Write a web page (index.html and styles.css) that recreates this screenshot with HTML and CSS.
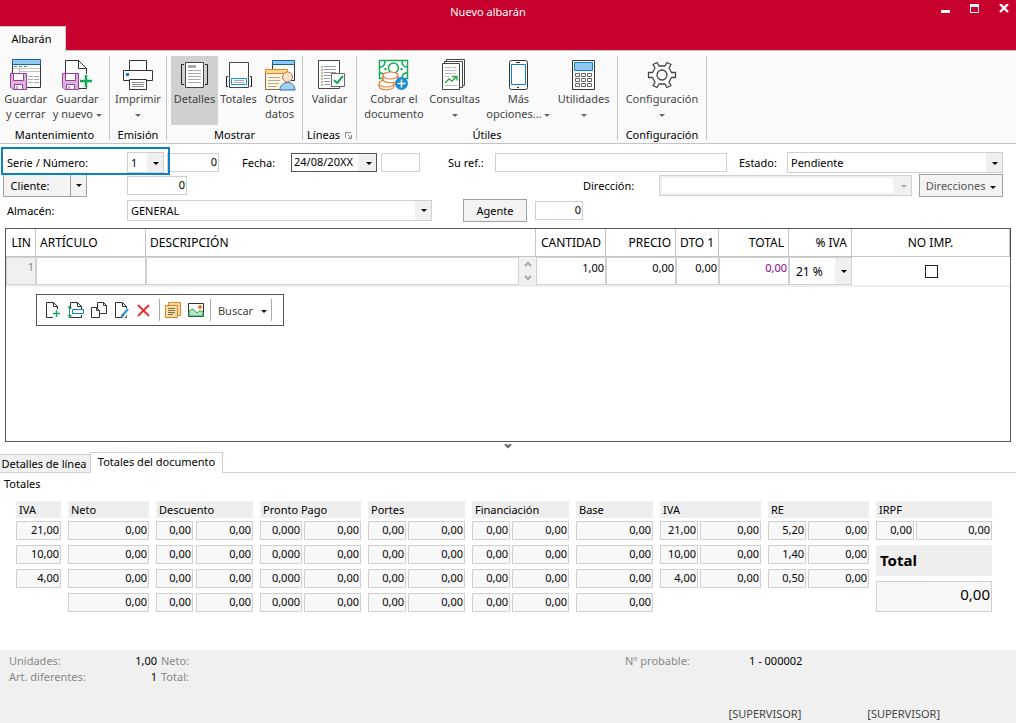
FILE: index.html
```html
<!DOCTYPE html>
<html lang="es">
<head>
<meta charset="utf-8">
<meta name="viewport" content="width=device-width, initial-scale=1">
<title>Nuevo albarán</title>
<link rel="stylesheet" href="styles.css">
</head>
<body>
<svg class="defs" aria-hidden="true">
  <symbol id="floppy" viewBox="0 0 17 17">
    <path d="M.5 .5H16.5V16.5H3L.5 14Z" fill="#dcb3dc" stroke="#9b3f9d"/>
    <path d="M3.500 .5V7.500H13.500V.5Z" fill="#fff" stroke="#9b3f9d"/>
    <path d="M4.500 16.500V11.500H12.500V16.500Z" fill="#fff" stroke="#9b3f9d"/>
    <path d="M7 13V16" stroke="#9b3f9d"/>
  </symbol>
  <symbol id="sheet" viewBox="0 0 18 18">
    <path d="M2.500 1.500H9.500L13.500 5.500V16.500H2.500Z" fill="#fff" stroke="#333"/>
    <path d="M9.500 1.500V5.500H13.500" fill="none" stroke="#333"/>
  </symbol>
</svg>

<header class="titlebar">
  <h1 class="title">Nuevo albarán</h1>
  <div class="window-buttons">
    <button type="button" aria-label="Minimizar"><svg width="9" height="9"><path d="M0 6h9v3H0z" fill="#fff"/></svg></button>
    <button type="button" aria-label="Maximizar"><svg width="9" height="9"><path d="M.5 .5h8v8h-8z" fill="none" stroke="#fff"/><path d="M0 0h9v3H0z" fill="#fff"/></svg></button>
    <button type="button" aria-label="Cerrar"><svg width="10" height="10"><path d="M1 0L9 8M9 0L1 8" stroke="#fff" stroke-width="2.400"/></svg></button>
  </div>
</header>
<nav class="ribbon-tabs"><button type="button" class="ribbon-tab">Albarán</button></nav>

<div class="ribbon">
  <section class="group g-mant">
    <div class="tools">
      <button type="button" class="tool">
        <svg width="32" height="32"><path d="M2.500 5.500h28v23h-28z" fill="#fff" stroke="#333"/><path d="M2.500 .5h28v5h-28z" fill="#91c9ef" stroke="#0b65ae"/><path d="M4 7.500h3M9 7.500h3M14 7.500h3" stroke="#777"/><path d="M3 9.500h27M9.500 10v5M9 12.500h21" stroke="#c4c4c4"/><path d="M18 17.500h5M24 17.500h5M18 20.500h5M24 20.500h5M18 23.500h5M24 23.500h5" stroke="#aaa"/><use href="#floppy" x="0" y="14" width="17" height="17"/></svg>
        <span>Guardar<br>y cerrar</span></button>
      <button type="button" class="tool">
        <svg width="32" height="32"><path d="M4.500 1.500h13l8 8v20h-21z" fill="#fff" stroke="#333"/><path d="M17.500 1.500v8h8" fill="none" stroke="#333"/><path d="M19 15h13v14H19z" fill="#fafafa"/><path d="M25.500 28v1.500H17" fill="none" stroke="#333"/><use href="#floppy" x="1" y="14" width="17" height="17"/><path d="M25 16v12M19 22h12" stroke="#17a955" stroke-width="2.500"/></svg>
        <span>Guardar<br>y nuevo <i class="caret"></i></span></button>
    </div>
    <h2>Mantenimiento</h2>
  </section>
  <section class="group g-emis">
    <div class="tools">
      <button type="button" class="tool">
        <svg width="32" height="32"><path d="M7.500 11V1.500h17V11" fill="#fff" stroke="#333"/><path d="M1.500 11.500h29v10h-29z" fill="#fff" stroke="#333"/><path d="M4 14h3v3H4z" fill="#0b80d0"/><path d="M7.500 20.500h17v10h-17z" fill="#fff" stroke="#333"/><path d="M10 23.500h12M10 25.500h12M10 27.500h12" stroke="#888"/></svg>
        <span>Imprimir<br><i class="caret"></i></span></button>
    </div>
    <h2>Emisión</h2>
  </section>
  <section class="group g-most">
    <div class="tools">
      <button type="button" class="tool active">
        <svg width="32" height="32"><path d="M6.500 3.500h18v25h-18z" fill="#fff" stroke="#444"/><path d="M9 6h8v3H9z" fill="#aaa"/><path d="M9 11.500h13M9 14.500h13M9 17.500h13M9 20.500h13M9 23.500h13" stroke="#aaa"/><path d="M5 5.500H2.500v20H5M26 5.500h2.500v20H26" fill="none" stroke="#222"/></svg>
        <span>Detalles</span></button>
      <button type="button" class="tool">
        <svg width="32" height="32"><path d="M6.500 3.500h19v25h-19z" fill="#fff" stroke="#444"/><path d="M8.500 19.500h15v6h-15z" fill="#fff" stroke="#099fe3"/><path d="M11 21.500h10M11 23.500h10" stroke="#aaa"/><path d="M5 17.500H3.500v10H5M27 17.500h1.500v10H27" fill="none" stroke="#222"/></svg>
        <span>Totales</span></button>
      <button type="button" class="tool">
        <svg width="32" height="32"><path d="M8.500 5.500h22v16h-22z" fill="#fff" stroke="#333"/><path d="M8.500 1.500h22v4h-22z" fill="#91c9ef" stroke="#0b65ae"/><path d="M1.500 14.500h22v16h-22z" fill="#fff4d8" stroke="#7b6c55"/><path d="M1.500 10.500h22v4h-22z" fill="#f6d88f" stroke="#e48332"/><path d="M4 18.500h12M4 21.500h12M4 24.500h11M4 27.500h9" stroke="#aaa"/><circle cx="23.500" cy="18" r="5" fill="#fbe0c6" stroke="#a87954"/><path d="M16 31c0-10 15-10 15 0z" fill="#a5cff0" stroke="#2373b5"/></svg>
        <span>Otros<br>datos</span></button>
    </div>
    <h2>Mostrar</h2>
  </section>
  <section class="group g-lin">
    <div class="tools">
      <button type="button" class="tool">
        <svg width="32" height="32"><path d="M4.500 1.500h21v28h-21z" fill="#fff" stroke="#444"/><path d="M10 7.500h12M10 10.500h12M10 13.500h12M10 16.500h7M10 19.500h6M10 22.500h6M10 25.500h6" stroke="#999"/><path d="M8 7v2M8 13v2M8 19v2M8 25v2" stroke="#17a955"/><path d="M8 10v2M8 16v2M8 22v2" stroke="#d3323e"/><path d="M17.500 14.500h13v13h-13z" fill="#fff" stroke="#666"/><path d="M20 21l3 3 6-7" fill="none" stroke="#17a955" stroke-width="2"/></svg>
        <span>Validar</span></button>
    </div>
    <h2>Líneas <svg class="launcher" width="7" height="7"><path d="M.5 6V.5H6" fill="none" stroke="#888"/><path d="M3 3l3 3M6.500 3v3.500H3" fill="none" stroke="#888"/></svg></h2>
  </section>
  <section class="group g-util">
    <div class="tools">
      <button type="button" class="tool t-cobrar">
        <svg width="32" height="32"><path d="M1.500 1.500h28v18h-28z" fill="#fff" stroke="#17a955" stroke-width="1.500"/><path d="M2 8q5 0 5-6M24 2q0 6 5 6M2 14q4 0 5 5M24 19q0-5 5-5" fill="none" stroke="#17a955" stroke-width="1.500"/><circle cx="15.500" cy="9" r="5" fill="#fff" stroke="#17a955" stroke-width="1.500"/><circle cx="7.500" cy="10" r="1.200" fill="#17a955"/><circle cx="23.500" cy="10" r="1.200" fill="#17a955"/><g fill="#fff" stroke="#e9792f" stroke-width="1.200"><path d="M1 25v2c0 5 15 5 15 0v-2"/><ellipse cx="8.500" cy="24.500" rx="7.500" ry="3.500"/><path d="M5 17v3c0 5 15 5 15 0v-3"/><ellipse cx="12.500" cy="16.500" rx="7.500" ry="3.500"/></g><circle cx="23.500" cy="24.500" r="6.500" fill="#188bd2"/><path d="M23.500 20.500v8M19.500 24.500h8" stroke="#fff" stroke-width="1.500"/></svg>
        <span>Cobrar el<br>documento</span></button>
      <button type="button" class="tool t-consultas">
        <svg width="32" height="32"><g fill="#fff" stroke="#444"><path d="M7.500 .5h18v26h-18z"/><path d="M5.500 2.500h18v26h-18z"/><path d="M3.500 4.500h17v26h-17z"/></g><path d="M6 8.500h6M13 8.500h4M6 11.500h12M6 14.500h7M14 14.500h3M6 17.500h4M6 26.500h12" stroke="#bbb"/><path d="M6 24l4-4 3 2 4-4M13 17.500h5v4" fill="none" stroke="#27ab42" stroke-width="1.400"/></svg>
        <span>Consultas<br><i class="caret"></i></span></button>
      <button type="button" class="tool t-mas">
        <svg width="32" height="32"><rect x="7.500" y="1.500" width="18" height="29" rx="2" fill="#fff" stroke="#333"/><path d="M9.500 5.500h14v20h-14z" fill="#fff" stroke="#0b80d0"/><path d="M14 3.500h4M15 28.500h2" stroke="#333"/></svg>
        <span>Más<br>opciones... <i class="caret"></i></span></button>
      <button type="button" class="tool t-util">
        <svg width="32" height="32"><path d="M4.500 1.500h22v29h-22z" fill="#fff" stroke="#333"/><path d="M6.500 3.500h18v8h-18z" fill="#91c9ef" stroke="#0b80d0"/><g fill="#fff" stroke="#666"><path d="M7.500 14.500h4v3h-4zM13.500 14.500h4v3h-4zM19.500 14.500h4v3h-4zM7.500 19.500h4v3h-4zM13.500 19.500h4v3h-4zM19.500 19.500h4v3h-4zM7.500 24.500h4v3h-4zM13.500 24.500h4v3h-4zM19.500 24.500h4v3h-4z"/></g></svg>
        <span>Utilidades<br><i class="caret"></i></span></button>
    </div>
    <h2>Útiles</h2>
  </section>
  <section class="group g-conf">
    <div class="tools">
      <button type="button" class="tool">
        <svg width="32" height="32"><path d="M2.500 13.500h4l2.500-4.500-2-3.500 4-2 2 3.500h6l2-3.500 4 2-2 3.500 2.500 4.500h4v5h-4l-2.500 4.500 2 3.500-4 2-2-3.500h-6l-2 3.500-4-2 2-3.500-2.500-4.500h-4z" fill="#fff" stroke="#444" stroke-width="1.300" stroke-linejoin="round"/><circle cx="16" cy="16" r="5" fill="#fff" stroke="#444" stroke-width="1.300"/></svg>
        <span>Configuración<br><i class="caret"></i></span></button>
    </div>
    <h2>Configuración</h2>
  </section>
</div>

<main>
  <form class="form">
    <div class="row first">
      <label class="lead" for="serie">Serie / Número:</label>
      <span class="combo w-serie"><select id="serie"><option>1</option></select></span>
      <input class="num w-numero" type="text" value="0" aria-label="Número">
      <label class="l-fecha" for="fecha">Fecha:</label>
      <span class="combo dark w-fecha"><input id="fecha" type="text" value="24/08/20XX"></span>
      <input class="w-hora" type="text" aria-label="Hora">
      <label class="l-ref" for="ref">Su ref.:</label>
      <input id="ref" class="w-ref" type="text">
      <label class="l-estado" for="estado">Estado:</label>
      <span class="combo w-estado"><select id="estado"><option>Pendiente</option></select></span>
    </div>
    <div class="row second">
      <span class="split"><button type="button">Cliente:</button><button type="button" aria-label="Más opciones de cliente"><i class="caret black"></i></button></span>
      <input class="num w-cliente" type="text" value="0" aria-label="Cliente">
      <span class="spacer"></span>
      <label class="l-dir" for="dir">Dirección:</label>
      <span class="combo off w-dir"><select id="dir" disabled><option></option></select></span>
      <button type="button" class="btn b-dir">Direcciones <i class="caret black"></i></button>
    </div>
    <div class="row third">
      <label class="lead" for="almacen">Almacén:</label>
      <span class="combo w-almacen"><select id="almacen"><option>GENERAL</option></select></span>
      <button type="button" class="btn b-agente">Agente</button>
      <input class="num w-agente" type="text" value="0" aria-label="Agente">
    </div>
  </form>

  <div class="lines">
    <table>
      <colgroup><col class="c-lin"><col class="c-art"><col><col class="c-70"><col class="c-70"><col class="c-dto"><col class="c-70"><col class="c-iva"><col class="c-noimp"></colgroup>
      <thead><tr><th class="r">LIN</th><th>ARTÍCULO</th><th>DESCRIPCIÓN</th><th class="r">CANTIDAD</th><th class="r">PRECIO</th><th class="r">DTO 1</th><th class="r">TOTAL</th><th class="r">% IVA</th><th class="c">NO IMP.</th></tr></thead>
      <tbody><tr>
        <td class="lin">1</td>
        <td><input type="text" aria-label="Artículo"></td>
        <td><div class="desc"><input type="text" aria-label="Descripción"><span class="spin"><svg width="8" height="20"><path d="M1 5l3-3 3 3M1 15l3 3 3-3" fill="none" stroke="#aaa" stroke-width="2"/></svg></span></div></td>
        <td><input class="num" type="text" value="1,00" aria-label="Cantidad"></td>
        <td><input class="num" type="text" value="0,00" aria-label="Precio"></td>
        <td><input class="num" type="text" value="0,00" aria-label="Descuento 1"></td>
        <td><input class="num purple" type="text" value="0,00" aria-label="Total"></td>
        <td><span class="combo iva"><select aria-label="% IVA"><option>21 %</option></select></span></td>
        <td class="c"><input type="checkbox" aria-label="No imprimir"></td>
      </tr></tbody>
    </table>
    <div class="toolbar">
      <button type="button" aria-label="Nueva línea"><svg width="18" height="18"><use href="#sheet" width="18" height="18"/><path d="M9 8h9v9H9z" fill="#fff"/><path d="M12.500 9v7M9 12.500h7" stroke="#17a955" stroke-width="1.400"/></svg></button>
      <button type="button" aria-label="Insertar línea"><svg width="18" height="18"><use href="#sheet" x="1" width="18" height="18"/><path d="M0 8h18v6H0z" fill="#fff"/><path d="M5.500 8.500h11v4h-11z" fill="#fff" stroke="#0b80d0"/><path d="M2.500 5v12M.5 7l2-2 2 2M.5 14l2 2 2-2" fill="none" stroke="#17a955"/></svg></button>
      <button type="button" aria-label="Duplicar línea"><svg width="18" height="18"><path d="M7.500 1.500h6l3 3v8h-9z" fill="#fff" stroke="#333"/><path d="M13.500 1.500v3h3" fill="none" stroke="#333"/><path d="M1.500 6.500h5l3 3v7h-8z" fill="#fff" stroke="#333"/><path d="M6.500 6.500v3h3" fill="none" stroke="#333"/></svg></button>
      <button type="button" aria-label="Modificar línea"><svg width="18" height="18"><use href="#sheet" width="18" height="18"/><path d="M17 7l-8 9" stroke="#fff" stroke-width="5"/><path d="M15 8l-6 7" stroke="#2c91d8" stroke-width="2.200"/><path d="M8 16l1-3 2 2z" fill="#0b65ae"/></svg></button>
      <button type="button" aria-label="Eliminar línea"><svg width="18" height="18"><path d="M2 4l11 11M13 4L2 15" stroke="#ec3434" stroke-width="2"/></svg></button>
      <span class="sep"></span>
      <button type="button" aria-label="Notas"><svg width="18" height="18"><path d="M4.500 1.500h12v13h-12z" fill="#fbdfa1" stroke="#e2802d"/><path d="M1.500 4.500h12v12h-12z" fill="#fbdfa1" stroke="#e2802d"/><path d="M4 7.500h7M4 9.500h7M4 11.500h7M4 13.500h5" stroke="#7b6c55"/></svg></button>
      <button type="button" aria-label="Imagen"><svg width="18" height="18"><path d="M1.500 2.500h15v13h-15z" fill="#fff" stroke="#333"/><path d="M2 11q3-5 6-1l2 2q3-4 6-1v4H2z" fill="#b9e4c8" stroke="#17a955"/><circle cx="13" cy="6" r="2" fill="#e9792f"/></svg></button>
      <span class="sep"></span>
      <button type="button" class="buscar">Buscar <i class="caret black"></i></button>
      <span class="sep"></span>
    </div>
  </div>
  <button type="button" class="collapse" aria-label="Contraer"><svg width="8" height="5"><path d="M1 0l3 3 3-3" fill="none" stroke="#666" stroke-width="2"/></svg></button>

  <div class="tabs" role="tablist">
    <button type="button" role="tab" aria-selected="false">Detalles de línea</button>
    <button type="button" role="tab" aria-selected="true">Totales del documento</button>
  </div>
  <section class="panel">
    <h2>Totales</h2>
    <div class="totals">
      <fieldset><legend>IVA</legend><input value="21,00" readonly aria-label="IVA 1"><input value="10,00" readonly aria-label="IVA 2"><input value="4,00" readonly aria-label="IVA 3"></fieldset>
      <fieldset><legend>Neto</legend><input value="0,00" readonly aria-label="Neto 1"><input value="0,00" readonly aria-label="Neto 2"><input value="0,00" readonly aria-label="Neto 3"><input value="0,00" readonly aria-label="Neto total"></fieldset>
      <fieldset class="two a"><legend>Descuento</legend><input value="0,00" aria-label="% descuento 1"><input value="0,00" aria-label="Descuento 1"><input value="0,00" aria-label="% descuento 2"><input value="0,00" aria-label="Descuento 2"><input value="0,00" aria-label="% descuento 3"><input value="0,00" aria-label="Descuento 3"><input value="0,00" aria-label="% descuento total"><input value="0,00" aria-label="Descuento total"></fieldset>
      <fieldset class="two b"><legend>Pronto Pago</legend><input value="0,000" aria-label="% pronto pago 1"><input value="0,00" aria-label="Pronto pago 1"><input value="0,000" aria-label="% pronto pago 2"><input value="0,00" aria-label="Pronto pago 2"><input value="0,000" aria-label="% pronto pago 3"><input value="0,00" aria-label="Pronto pago 3"><input value="0,000" aria-label="% pronto pago total"><input value="0,00" aria-label="Pronto pago total"></fieldset>
      <fieldset class="two"><legend>Portes</legend><input value="0,00" aria-label="% portes 1"><input value="0,00" aria-label="Portes 1"><input value="0,00" aria-label="% portes 2"><input value="0,00" aria-label="Portes 2"><input value="0,00" aria-label="% portes 3"><input value="0,00" aria-label="Portes 3"><input value="0,00" aria-label="% portes total"><input value="0,00" aria-label="Portes total"></fieldset>
      <fieldset class="two"><legend>Financiación</legend><input value="0,00" aria-label="% financiación 1"><input value="0,00" aria-label="Financiación 1"><input value="0,00" aria-label="% financiación 2"><input value="0,00" aria-label="Financiación 2"><input value="0,00" aria-label="% financiación 3"><input value="0,00" aria-label="Financiación 3"><input value="0,00" aria-label="% financiación total"><input value="0,00" aria-label="Financiación total"></fieldset>
      <fieldset><legend>Base</legend><input value="0,00" readonly aria-label="Base 1"><input value="0,00" readonly aria-label="Base 2"><input value="0,00" readonly aria-label="Base 3"><input value="0,00" readonly aria-label="Base total"></fieldset>
      <fieldset class="two"><legend>IVA</legend><input value="21,00" aria-label="% IVA 1"><input value="0,00" aria-label="Cuota IVA 1"><input value="10,00" aria-label="% IVA 2"><input value="0,00" aria-label="Cuota IVA 2"><input value="4,00" aria-label="% IVA 3"><input value="0,00" aria-label="Cuota IVA 3"></fieldset>
      <fieldset class="two"><legend>RE</legend><input value="5,20" aria-label="% RE 1"><input value="0,00" aria-label="RE 1"><input value="1,40" aria-label="% RE 2"><input value="0,00" aria-label="RE 2"><input value="0,50" aria-label="% RE 3"><input value="0,00" aria-label="RE 3"></fieldset>
      <fieldset class="two"><legend>IRPF</legend><input value="0,00" aria-label="% IRPF"><input value="0,00" aria-label="IRPF"><label class="total-label" for="total">Total</label><input id="total" class="total" value="0,00" readonly></fieldset>
    </div>
  </section>
</main>

<footer class="status">
  <dl class="counts"><dt>Unidades:</dt><dd>1,00</dd><dt>Neto:</dt><dt>Art. diferentes:</dt><dd>1</dd><dt>Total:</dt></dl>
  <div class="probable"><span>Nº probable:</span><b>1 - 000002</b></div>
  <div class="users"><span>[SUPERVISOR]</span><span>[SUPERVISOR]</span></div>
</footer>
</body>
</html>
```
FILE: styles.css
```css
*, *::before, *::after { box-sizing: border-box; }
body {
  margin: 0; min-height: 100vh; display: flex; flex-direction: column;
  background: #fff; color: #000; font: 11px/15px "Noto Sans", "Open Sans", sans-serif;
}
button, input, select { font: inherit; color: inherit; border-radius: 0; margin: 0; }
button { padding: 0; border: 0; background: none; }
h1, h2, dl, dd { margin: 0; font: inherit; }
svg { display: block; }
.defs { position: absolute; width: 0; height: 0; }
.caret {
  display: inline-block; vertical-align: middle;
  border: 3px solid transparent; border-top-color: #666; border-bottom: 0;
}
.caret.black { border-top-color: #111; }

.titlebar { display: flex; height: 26px; background: #c8002d; color: #fff; }
.title { flex: 1; text-align: center; padding: 4px 0 0 78px; }
.window-buttons { display: flex; gap: 20px; width: 118px; padding: 4px 7px 0 0; justify-content: flex-end; align-items: flex-start; }
.ribbon-tabs { height: 24px; background: #c8002d; position: relative; z-index: 1; }
.ribbon-tab { height: 25px; width: 66px; padding: 0 2px 2px 0; background: #fafafa; border: solid #ccc; border-width: 1px 1px 0 0; }

.ribbon { display: flex; height: 94px; padding: 5px 0 0; background: #fafafa; border: solid #c4c4c4; border-width: 1px 0; }
.group { display: flex; flex-direction: column; justify-content: space-between; height: 84px; border-right: 1px solid #c4c4c4; }
.group h2 { text-align: center; line-height: 11px; }
.tools { display: flex; height: 69px; }
.tool { flex: 1 1 0; display: flex; flex-direction: column; align-items: center; padding-top: 3px; color: #444; white-space: nowrap; }
.tool.active { background: #d0d0d0; }
.g-mant { width: 110px; }
.g-mant .tools { padding-right: 6px; }
.g-emis { width: 57px; }
.g-most { width: 136px; }
.g-most .tools { padding: 0 3px 0 4px; }
.g-most .tool { flex: 0 0 41px; }
.g-most .tool.active { flex-basis: 47px; }
.g-lin { width: 54px; }
.g-util { width: 261px; }
.g-util .tools { padding: 0 4px; }
.g-util .t-cobrar { flex: 66; }
.g-util .t-consultas { flex: 56; }
.g-util .t-mas { flex: 72; }
.g-util .t-util { flex: 59; }
.g-conf { width: 89px; }
.launcher { display: inline-block; margin-left: 2px; }

.form { padding: 8px 13px 0 7px; }
.row { display: flex; align-items: center; height: 24px; }
.first { height: 21px; margin-bottom: 1px; position: relative; }
.second { height: 23px; margin-bottom: 1px; }
.first::after {
  content: ""; position: absolute; left: -6px; top: -5px; width: 169px; height: 28px;
  border: 2px solid #0a82c8; pointer-events: none;
}
.row > * { flex: none; }
.row .lead { width: 120px; }
.row input { height: 19px; border: 1px solid #d0d0d0; background: #fff; padding: 0 3px 2px; outline: 0; min-width: 0; }
input.num { text-align: right; }
.row input.num { padding-right: 1px; }
.combo { position: relative; display: block; height: 21px; }
.combo select, .combo input {
  appearance: none; width: 100%; height: 100%; border: 1px solid #d0d0d0; padding: 0 18px 0 3px; outline: 0;
  background: linear-gradient(#f0f0f0, #f0f0f0) right / 16px 100% no-repeat #fff;
}
.combo::after {
  content: ""; position: absolute; right: 5px; top: 50%; margin-top: -1px;
  border: 3px solid transparent; border-top-color: #000; border-bottom: 0; pointer-events: none;
}
.row .combo.dark input { height: 100%; border-color: #555; padding: 0 18px 2px 2px; background: linear-gradient(#f0f0f0, #f0f0f0) right / 18px 100% no-repeat #fff; }
.combo.dark { height: 19px; }
.combo.off select { opacity: 1; border-color: #d0d0d0; box-shadow: inset 0 0 0 2px #f0f0f0; background-size: 18px 100%; }
.combo.off::after { border-top-color: #aaa; }
.w-serie { width: 37px; }
.w-numero { width: 52px; margin-left: 3px; }
.l-fecha { width: 49px; margin-left: 23px; }
.w-fecha { width: 86px; }
.w-hora { width: 39px; margin-left: 4px; }
.l-ref { width: 47px; margin-left: 28px; }
.row .w-ref { flex: 232 1 232px; width: 0; }
.l-estado { width: 48px; margin-left: 12px; }
.row .w-estado { flex: 216 1 216px; }
.btn, .split { height: 23px; border: 1px solid #a0a0a0; background: #f3f3f3; }
.split { display: flex; width: 84px; margin-left: -4px; margin-right: 40px; }
.split button:first-child { width: 67px; padding-right: 14px; border-right: 1px solid #a0a0a0; }
.split button:last-child { flex: 1; line-height: 0; }
.w-cliente { width: 60px; }
.row .spacer { flex: 396 1 0; }
.l-dir { width: 76px; }
.row .w-dir { flex: 253 1 0; }
.b-dir { width: 84px; margin-left: 7px; color: #555; white-space: nowrap; }
.b-dir .caret { margin-left: 2px; }
.w-almacen { width: 305px; }
.b-agente { width: 64px; margin: 0 8px 0 31px; }
.w-agente { width: 48px; }

.lines { margin: 6px 5px 0; height: 214px; border: 1px solid #555; }
table { width: 100%; table-layout: fixed; border-collapse: separate; border-spacing: 0; border-bottom: 2px solid #eee; }
.c-lin { width: 30px; } .c-art { width: 110px; } .c-70 { width: 70px; }
.c-dto { width: 43px; } .c-iva { width: 63px; } .c-noimp { width: 158px; }
th { height: 28px; padding: 0 4px; font-weight: normal; font-size: 12px; text-align: left; border: solid #c4c4c4; border-width: 0 1px 1px 0; white-space: nowrap; }
th.r { text-align: right; }
.lines .c { text-align: center; }
td { height: 28px; padding: 0; vertical-align: top; }
td input[type=text], td .combo { display: block; width: 100%; height: 28px; }
td input[type=text] { border: 1px solid #d0d0d0; padding: 0 1px 8px 3px; outline: 0; background: #fff; }
td.lin { background: #f0f0f0; border: 1px solid #d0d0d0; color: #888; text-align: right; padding: 1px 1px 0 0; }
td input.purple { color: #8b008b; }
.desc { display: flex; }
.spin { width: 17px; flex: none; display: grid; place-items: center; background: #f0f0f0; }
td .combo select { padding-left: 6px; font-size: 12px; }
td input[type=checkbox] { appearance: none; width: 13px; height: 13px; margin-top: 8px; border: 1px solid #222; background: #fff; }
.toolbar { display: flex; align-items: center; width: 248px; height: 32px; margin: 7px 0 0 30px; padding: 0 7px; border: 1px solid #555; }
.toolbar button { margin-right: 5px; }
.toolbar .sep { width: 1px; height: 22px; margin-right: 4px; background: #aaa; }
.toolbar .buscar { margin: 0 4px 0 3px; color: #444; white-space: nowrap; }
.buscar .caret { margin-left: 5px; }
.collapse { display: block; margin: 2px auto 3px; }

.tabs { display: flex; align-items: flex-end; height: 21px; border-bottom: 1px solid #d0d0d0; }
.tabs button { height: 18px; width: 90px; padding-right: 2px; background: #f0f0f0; border-top: 1px solid #d0d0d0; white-space: nowrap; }
.tabs button[aria-selected=true] { height: 21px; width: 133px; margin-bottom: -1px; padding: 0 0 3px; background: #fff; border: 1px solid #d0d0d0; border-bottom: 0; }
.panel h2 { padding: 3px 4px 10px; }
.totals {
  display: grid; gap: 7px; padding: 0 24px 20px 16px; align-items: start;
  grid-template-columns: 45fr 81fr 97fr 101fr 97fr 97fr 77fr 101fr 101fr 116fr;
}
fieldset { display: grid; grid-template-columns: 100%; gap: 5px 2px; min-width: 0; margin: 0; padding: 0; border: 0; }
fieldset.two { grid-template-columns: 38px minmax(0, 1fr); }
fieldset.two.a { grid-template-columns: 37px minmax(0, 1fr); column-gap: 3px; }
fieldset.two.b { grid-template-columns: 42px minmax(0, 1fr); }
legend { width: 100%; height: 17px; margin-bottom: 3px; padding: 1px 3px; background: #eee; }
fieldset input { width: 100%; height: 19px; padding: 0 1px 2px; border: 1px solid #d0d0d0; background: #f8f8f8; text-align: right; outline: 0; }
.total-label { grid-column: 1 / -1; height: 31px; padding: 8px 4px; background: #eee; font-size: 15px; font-weight: bold; }
fieldset .total { grid-column: 1 / -1; height: 31px; padding-bottom: 6px; font-size: 15px; }

.status {
  flex: none; display: grid; grid-template-columns: 625fr 391fr; grid-template-rows: 1fr auto;
  height: 73px; margin-top: auto; padding: 3px 0 2px; background: #f0f0f0;
}
.counts { display: grid; grid-template-columns: 72px 72px auto; grid-auto-rows: 16px; column-gap: 4px; padding-left: 9px; line-height: 16px; color: #888; white-space: nowrap; }
.counts dd { text-align: right; color: #000; }
.probable { display: flex; color: #888; line-height: 16px; }
.probable span { width: 124px; }
.probable b { font-weight: normal; color: #000; }
.users { grid-column: 1 / -1; display: flex; justify-content: flex-end; gap: 66px; padding-right: 76px; color: #444; }
```
